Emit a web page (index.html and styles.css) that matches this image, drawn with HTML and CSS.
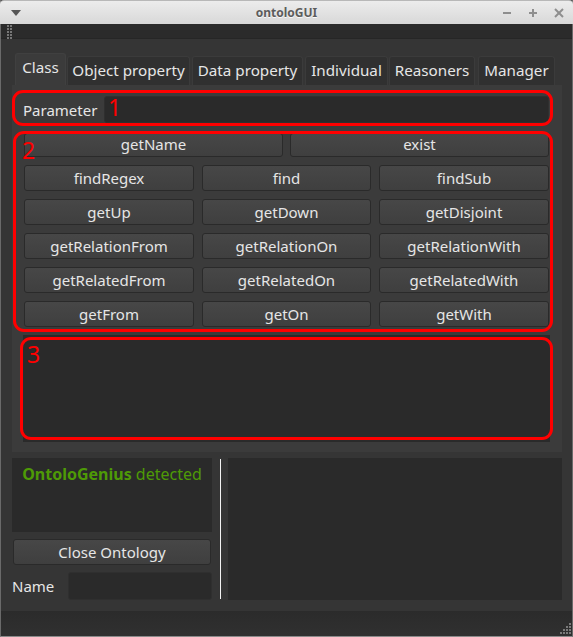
FILE: index.html
```html
<!DOCTYPE html>
<html>
<head>
<meta charset="utf-8">
<link rel="stylesheet" href="styles.css">
</head>
<body>
<div class="window">
  <div class="titlebar">
    <svg class="menu-arrow" width="10" height="6" viewBox="0 0 10 6"><polygon points="0,0 10,0 5,6" fill="#555"/></svg>
    <span class="title">ontoloGUI</span>
    <div class="wm-buttons">
      <svg width="10" height="10" viewBox="0 0 10 10"><line x1="1" y1="5" x2="9" y2="5" stroke="#8e8e8e" stroke-width="2"/></svg>
      <svg width="10" height="10" viewBox="0 0 10 10"><line x1="1" y1="5" x2="9" y2="5" stroke="#8e8e8e" stroke-width="2"/><line x1="5" y1="1" x2="5" y2="9" stroke="#8e8e8e" stroke-width="2"/></svg>
      <svg width="10" height="10" viewBox="0 0 10 10"><line x1="1" y1="1" x2="9" y2="9" stroke="#8e8e8e" stroke-width="2"/><line x1="9" y1="1" x2="1" y2="9" stroke="#8e8e8e" stroke-width="2"/></svg>
    </div>
  </div>
  <div class="toolbar">
    <svg class="grip" width="5" height="16" viewBox="0 0 5 16">
      <g fill="#777">
        <rect x="0" y="0" width="2" height="2"/><rect x="3" y="0" width="2" height="2"/>
        <rect x="0" y="3" width="2" height="2"/><rect x="3" y="3" width="2" height="2"/>
        <rect x="0" y="6" width="2" height="2"/><rect x="3" y="6" width="2" height="2"/>
        <rect x="0" y="9" width="2" height="2"/><rect x="3" y="9" width="2" height="2"/>
        <rect x="0" y="12" width="2" height="2"/><rect x="3" y="12" width="2" height="2"/>
      </g>
    </svg>
  </div>
  <div class="main">
    <div class="tabwidget">
      <div class="tabbar">
        <div class="tab selected">Class</div>
        <div class="tab">Object property</div>
        <div class="tab">Data property</div>
        <div class="tab">Individual</div>
        <div class="tab">Reasoners</div>
        <div class="tab">Manager</div>
      </div>
      <div class="pane">
        <div class="param-row">
          <span class="label param-label">Parameter</span>
          <div class="input param-input"></div>
        </div>
        <div class="btn-row two">
          <div class="btn">getName</div>
          <div class="btn">exist</div>
        </div>
        <div class="btn-grid">
          <div class="btn">findRegex</div>
          <div class="btn">find</div>
          <div class="btn">findSub</div>
          <div class="btn">getUp</div>
          <div class="btn">getDown</div>
          <div class="btn">getDisjoint</div>
          <div class="btn">getRelationFrom</div>
          <div class="btn">getRelationOn</div>
          <div class="btn">getRelationWith</div>
          <div class="btn">getRelatedFrom</div>
          <div class="btn">getRelatedOn</div>
          <div class="btn">getRelatedWith</div>
          <div class="btn">getFrom</div>
          <div class="btn">getOn</div>
          <div class="btn">getWith</div>
        </div>
        <div class="output"></div>

        <div class="mark mark1"><span class="num num1">1</span></div>
        <div class="mark mark2"><span class="num num2">2</span></div>
        <div class="mark mark3"><span class="num num3">3</span></div>
      </div>
    </div>
    <div class="bottom">
      <div class="left-col">
        <div class="log"><b>OntoloGenius</b> detected</div>
        <div class="btn close-btn">Close Ontology</div>
        <div class="name-row">
          <span class="label">Name</span>
          <div class="input name-input"></div>
        </div>
      </div>
      <div class="splitter"></div>
      <div class="right-box"></div>
    </div>
  </div>
  <div class="statusbar">
    <svg class="sizegrip" width="12" height="12" viewBox="0 0 12 12">
      <g fill="#7a7a7a">
        <rect x="9" y="0" width="2" height="2"/>
        <rect x="6" y="3" width="2" height="2"/><rect x="9" y="3" width="2" height="2"/>
        <rect x="3" y="6" width="2" height="2"/><rect x="6" y="6" width="2" height="2"/><rect x="9" y="6" width="2" height="2"/>
        <rect x="0" y="9" width="2" height="2"/><rect x="3" y="9" width="2" height="2"/><rect x="6" y="9" width="2" height="2"/><rect x="9" y="9" width="2" height="2"/>
      </g>
    </svg>
  </div>
</div>
</body>
</html>
```
FILE: styles.css
```css
* { box-sizing: border-box; }
html, body {
  margin: 0;
  padding: 0;
  background: #353535;
}
body {
  width: 573px;
  height: 637px;
  overflow: hidden;
  font-family: "Noto Sans", "Open Sans", sans-serif;
  font-size: 15px;
  color: #e3e3e3;
}
.window {
  width: 573px;
  height: 637px;
  display: flex;
  flex-direction: column;
  border-left: 1px solid #6a6a6a;
  border-right: 1px solid #6a6a6a;
  border-bottom: 1px solid #8a8a8a;
  background: #353535;
}
.titlebar {
  height: 24px;
  flex: none;
  display: flex;
  align-items: center;
  position: relative;
  background: linear-gradient(#ececec, #d8d8d8);
  border-top: 1px solid #b8b8b8;
  border-radius: 4px 4px 0 0;
  margin: 0 -1px;
}
.menu-arrow { margin-left: 11px; }
.title {
  position: absolute;
  left: 0; right: 0;
  text-align: center;
  font-family: "Noto Sans", sans-serif;
  font-weight: bold;
  font-size: 12px;
  color: #5c5c5c;
  text-shadow: 0 1px 0 #f8f8f8;
}
.wm-buttons {
  margin-left: auto;
  margin-right: 9px;
  display: flex;
  gap: 16px;
}
.toolbar {
  height: 15px;
  flex: none;
  background: #2b2b2b;
  border-bottom: 1px solid #262626;
  padding: 1px 0 0 6px;
}
.grip { display: block; }
.main {
  flex: 1;
  padding: 14px 10px 11px 11px;
  display: flex;
  flex-direction: column;
  gap: 6px;
}
.tabwidget { display: flex; flex-direction: column; }
.tabbar {
  display: flex;
  height: 32px;
  padding-left: 3px;
  gap: 1px;
  align-items: flex-end;
}
.tab {
  height: 29px;
  padding: 0 0 2px 0;
  display: flex;
  align-items: center;
  justify-content: center;
  background: #303030;
  border: 1px solid #3b3b3b;
  border-bottom: none;
  border-radius: 3px 3px 0 0;
  font-size: 15.2px;
  color: #e6e6e6;
  white-space: nowrap;
}
.tab.selected {
  height: 32px;
  background: #3b3b3b;
  border-color: #404040;
  padding-bottom: 5px;
}
.tab:nth-child(2) { width: 123px; }
.tab:nth-child(3) { width: 111px; margin-left: 1px; }
.tab:nth-child(4) { width: 83px; margin-left: 1px; }
.tab:nth-child(5) { width: 86px; }
.tab:nth-child(6) { width: 77px; margin-left: 2px; }
.tab.selected { width: 51px; }
.pane {
  position: relative;
  height: 367px;
  background: #3b3b3b;
  padding: 11px 12px 10px 11px;
  display: flex;
  flex-direction: column;
}
.param-row {
  display: flex;
  align-items: center;
  height: 27px;
}
.label { font-size: 15px; color: #e6e6e6; }
.param-label { width: 81px; flex: none; }
.input {
  background: #2a2a2a;
  border-radius: 3px;
  border: 1px solid #2f2f2f;
}
.param-input { flex: 1; height: 27px; margin-right: 1px; }
.btn {
  display: flex;
  align-items: center;
  justify-content: center;
  background: linear-gradient(#474747, #3f3f3f);
  border: 1px solid #2a2a2a;
  border-radius: 3px;
  font-size: 15px;
  color: #e6e6e6;
  white-space: nowrap;
  padding-bottom: 1px;
}
.btn-row.two {
  margin-top: 10px;
  margin-left: 1px;
  display: grid;
  grid-template-columns: 259px 259px;
  gap: 7px;
  height: 24px;
}
.btn-row.two .btn { padding-bottom: 2px; }
.btn-grid {
  margin-top: 8px;
  margin-left: 1px;
  display: grid;
  grid-template-columns: 170px 169px 170px;
  grid-auto-rows: 26px;
  column-gap: 8px;
  row-gap: 8px;
}
.output {
  margin-top: 8px;
  height: 107px;
  background: #2a2a2a;
}
.mark {
  position: absolute;
  border: 3px solid #ff0000;
  border-radius: 11px;
}
.mark1 { left: 0; top: 5px; width: 541px; height: 36px; }
.mark2 { left: 1px; top: 46px; width: 540px; height: 201px; }
.mark3 { left: 8px; top: 252px; width: 533px; height: 103px; }
.num {
  position: absolute;
  color: #ff0000;
  font-family: "Noto Sans", sans-serif;
  font-size: 23px;
  line-height: 1;
}
.num1 { left: 93px; top: 3px; }
.num2 { left: 6px; top: 5px; }
.num3 { left: 4px; top: 3px; }
.bottom {
  height: 142px;
  display: flex;
}
.left-col {
  width: 200px;
  display: flex;
  flex-direction: column;
}
.log {
  height: 74px;
  background: #2a2a2a;
  color: #4e9a06;
  text-align: center;
  font-size: 16px;
  padding-top: 5px;
  white-space: nowrap;
}
.log b { font-weight: bold; }
.close-btn {
  margin-top: 7px;
  margin-left: 1px;
  width: 198px;
  height: 26px;
}
.name-row {
  margin-top: 7px;
  display: flex;
  align-items: center;
  height: 28px;
}
.name-input {
  margin-left: auto;
  width: 144px;
  height: 28px;
}
.splitter {
  width: 1px;
  margin: 1px 7px 1px 8px;
  background: #f2f2f2;
}
.right-box {
  flex: 1;
  background: #2a2a2a;
}
.statusbar {
  height: 25px;
  flex: none;
  background: linear-gradient(#2b2b2b, #303030);
  display: flex;
  justify-content: flex-end;
  align-items: flex-end;
  padding: 0 0 1px 0;
}
.sizegrip { display: block; margin-right: 0; }
```
